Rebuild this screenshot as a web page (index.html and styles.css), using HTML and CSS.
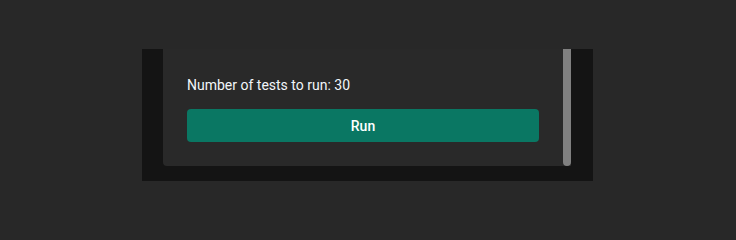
FILE: index.html
```html
<!DOCTYPE html>
<html lang="en">
<head>
<meta charset="utf-8">
<title>Run tests</title>
<link rel="stylesheet" href="styles.css">
</head>
<body>
<div class="frame">
  <div class="card">
    <div class="content">
      <p class="label">Number of tests to run: 30</p>
      <button class="run-btn" type="button">Run</button>
    </div>
    <div class="scrollbar"></div>
  </div>
</div>
</body>
</html>
```
FILE: styles.css
```css
html, body {
  margin: 0;
  padding: 0;
}
body {
  background: #282828;
  padding: 49px 0 0 142px;
  font-family: Roboto, "Liberation Sans", sans-serif;
}
.frame {
  width: 451px;
  height: 132px;
  box-sizing: border-box;
  background: #141414;
  padding: 0 22px 15px 21px;
  display: flex;
}
.card {
  flex: 1;
  display: flex;
  background: #292929;
  border-bottom-left-radius: 4px;
}
.content {
  flex: 1;
  padding: 28px 24px 24px 24px;
  display: flex;
  flex-direction: column;
}
.label {
  margin: 0;
  font-size: 14px;
  line-height: 17px;
  color: #f2f6fa;
}
.run-btn {
  margin-top: 15px;
  height: 33px;
  border: none;
  border-radius: 4px;
  background: #0a7763;
  color: #ffffff;
  font-family: Roboto, "Liberation Sans", sans-serif;
  font-size: 14px;
  font-weight: 500;
  cursor: pointer;
}
.scrollbar {
  width: 8px;
  background: #808080;
  border-bottom-left-radius: 4px;
  border-bottom-right-radius: 4px;
}
```
